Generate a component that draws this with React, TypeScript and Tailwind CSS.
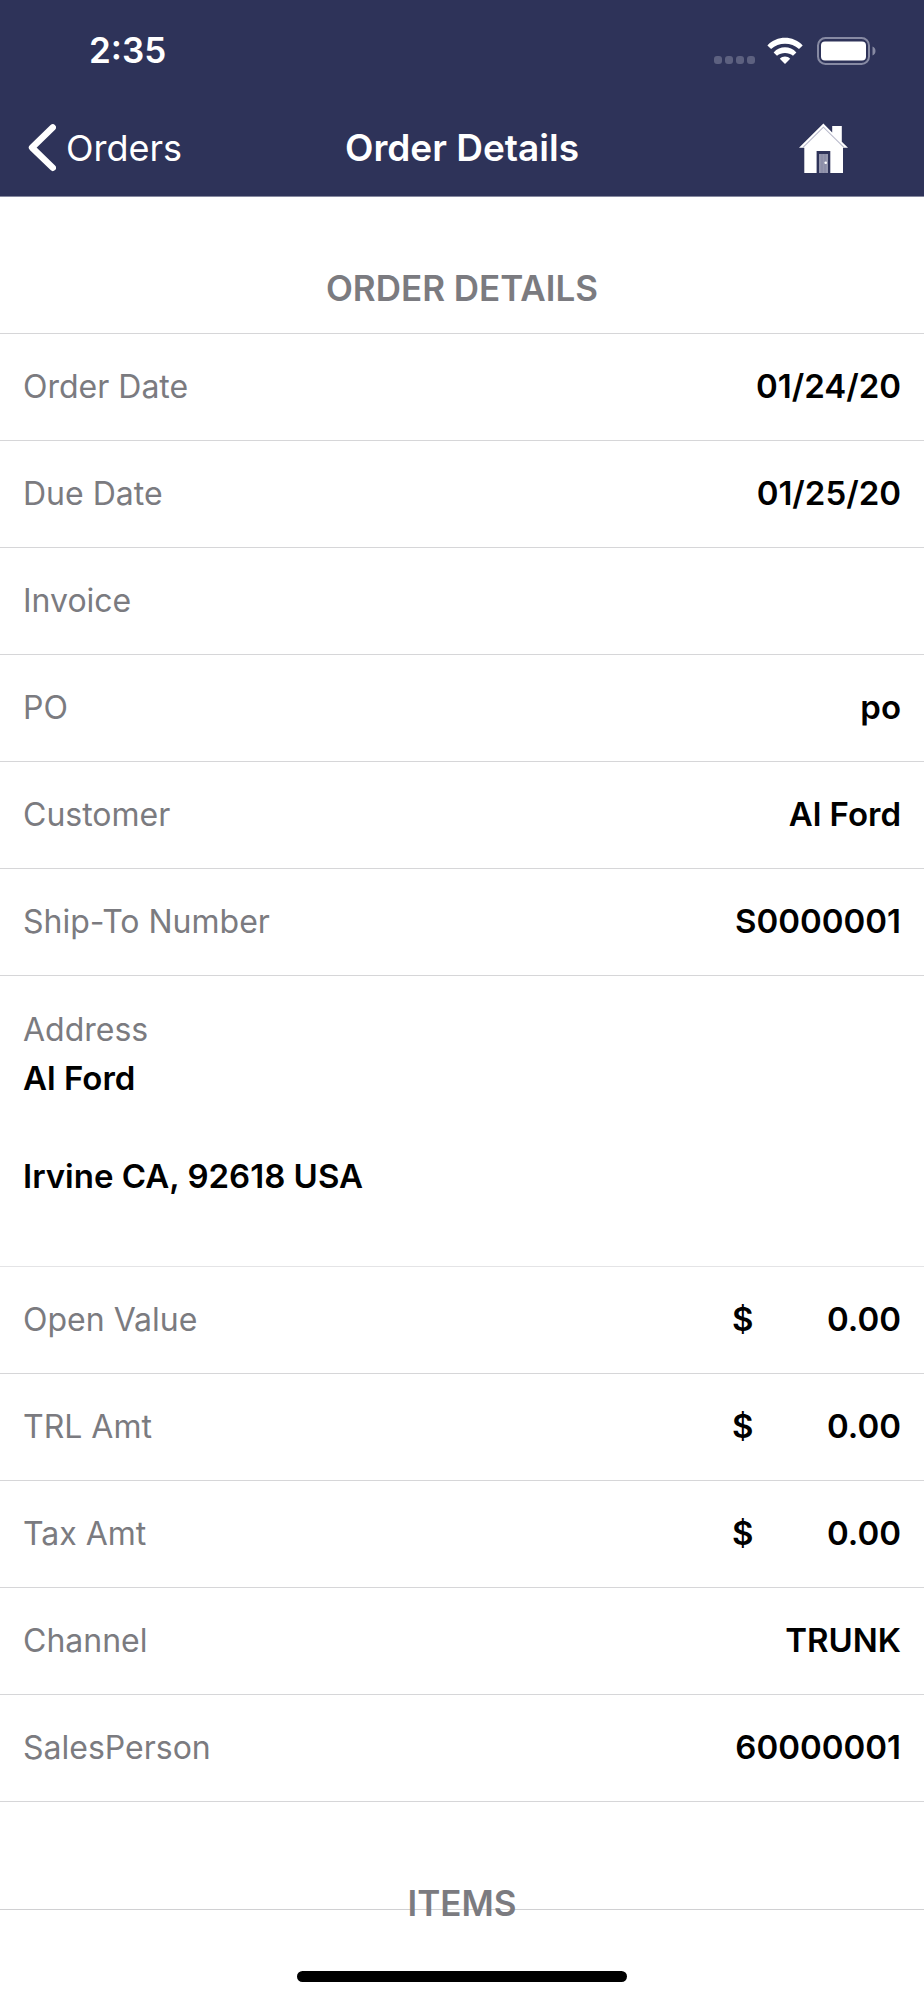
import type { ReactNode } from "react"

interface DetailRowProps {
  label: string
  children?: ReactNode
}

interface Detail {
  label: string
  value?: string
}

const orderInfo: Detail[] = [
  { label: "Order Date", value: "01/24/20" },
  { label: "Due Date", value: "01/25/20" },
  { label: "Invoice" },
  { label: "PO", value: "po" },
  { label: "Customer", value: "Al Ford" },
  { label: "Ship-To Number", value: "S0000001" },
]

const amounts: Detail[] = [
  { label: "Open Value", value: "0.00" },
  { label: "TRL Amt", value: "0.00" },
  { label: "Tax Amt", value: "0.00" },
]

const salesInfo: Detail[] = [
  { label: "Channel", value: "TRUNK" },
  { label: "SalesPerson", value: "60000001" },
]

function WifiIcon() {
  return (
    <svg width="36" height="27" viewBox="0 0 36 27" fill="white" aria-hidden="true">
      <path d="M0.4 8.4C10 -1.8 26 -1.8 35.7 8.4L32 12C24.4 4.9 11.7 4.9 4.1 12Z" />
      <path d="M6.6 15.4C13 8.6 23 8.6 29.4 15.4L26 18.7C21.6 15 14.4 15 10 18.7Z" />
      <path d="M12.8 21.8C15.6 18.8 20.4 18.8 23.2 21.8L18 27Z" />
    </svg>
  )
}

function BatteryIcon() {
  return (
    <svg width="60" height="28" viewBox="0 0 60 28" aria-hidden="true">
      <rect x="1" y="1" width="51" height="26" rx="7.5" fill="none" stroke="#878aa3" strokeWidth="2" />
      <rect x="4" y="4.5" width="45" height="19" rx="4" fill="white" />
      <path d="M55.5 9.5C59.5 11 59.5 17 55.5 18.5Z" fill="#878aa3" />
    </svg>
  )
}

function BackIcon() {
  return (
    <svg width="28" height="48" viewBox="0 0 28 48" fill="none" stroke="white" strokeWidth="6.4" strokeLinecap="round" strokeLinejoin="round" aria-hidden="true">
      <path d="M24.8 3.4L4 23.6L24.8 43.8" />
    </svg>
  )
}

function HomeIcon() {
  return (
    <svg width="50" height="50" viewBox="0 0 50 50" aria-hidden="true">
      <path d="M0 24.8L24.4 0.6L33.2 9.4V3H42.8V18.8L49 24.8H44V50H5.3V24.8Z" fill="white" />
      <path d="M3.8 24.6L24.4 4.2L45.2 24.6" fill="none" stroke="#b9bacb" strokeWidth="1.1" />
      <rect x="17.6" y="28" width="13.7" height="22" fill="#2e3359" />
      <rect x="20" y="31" width="9" height="19" fill="#9496ad" />
      <path d="M23 31V50M26 31V50" stroke="#8083a0" strokeWidth="0.7" />
      <circle cx="26.7" cy="39.7" r="1.3" fill="white" />
    </svg>
  )
}

function DetailRow({ label, children }: DetailRowProps) {
  return (
    <div className="flex h-[107px] items-center justify-between border-b border-[#d6d6d8] px-[23px]">
      <dt className="text-[32px] text-[#7b7b80]">{label}</dt>
      <dd className="font-semibold">{children}</dd>
    </div>
  )
}

export default function App() {
  return (
    <div className="min-h-screen bg-white font-['Inter',sans-serif] text-[33px] text-black">
      <header className="border-b border-[#85889f] bg-[#2e3359] text-white">
        {/* Status bar */}
        <div className="flex h-[101px] items-center justify-between pr-[47px] pl-[89px]">
          <span className="text-[35px] font-semibold">2:35</span>
          <div className="flex items-center">
            <div className="mt-[18px] mr-3 flex gap-[3px]">
              {[0, 1, 2, 3].map((dot) => (
                <span key={dot} className="size-2 rounded-[3px] bg-[#5d6180]" />
              ))}
            </div>
            <WifiIcon />
            <div className="ml-[14px]">
              <BatteryIcon />
            </div>
          </div>
        </div>

        {/* Navigation */}
        <nav className="grid h-[95px] grid-cols-[1fr_auto_1fr] items-center px-7 pb-[2px]">
          <a href="#orders" className="flex items-center gap-[10px] text-[36px]">
            <BackIcon />
            Orders
          </a>
          <h1 className="text-center text-[37px] font-semibold whitespace-nowrap">Order Details</h1>
          <button type="button" aria-label="Home" className="mr-[47px] justify-self-end">
            <HomeIcon />
          </button>
        </nav>
      </header>

      <main>
        <section>
          <h2 className="flex h-[137px] items-end justify-center border-b border-[#d6d6d8] pb-6 text-[35px] leading-[42px] font-semibold text-[#7b7b80]">
            ORDER DETAILS
          </h2>
          <dl>
            {orderInfo.map((item) => (
              <DetailRow key={item.label} label={item.label}>
                {item.value}
              </DetailRow>
            ))}

            <div className="border-b border-[#e4e4e6] px-[23px] pt-[29px] pb-[65px] leading-[49px]">
              <dt className="text-[32px] leading-[49px] text-[#7b7b80]">Address</dt>
              <dd className="font-semibold">
                Al Ford
                <br />
                <br />
                Irvine CA, 92618 USA
              </dd>
            </div>

            {amounts.map((item) => (
              <DetailRow key={item.label} label={item.label}>
                <span className="flex w-[169px] justify-between">
                  <span>$</span>
                  <span>{item.value}</span>
                </span>
              </DetailRow>
            ))}

            {salesInfo.map((item) => (
              <DetailRow key={item.label} label={item.label}>
                {item.value}
              </DetailRow>
            ))}
          </dl>
        </section>

        {/* The list separator runs behind this heading */}
        <section className="relative pt-20">
          <div className="absolute inset-x-0 top-[107px] h-px bg-[#d0d0d2]" />
          <h2 className="relative text-center text-[35px] leading-[42px] font-semibold text-[#7b7b80]">ITEMS</h2>
        </section>
      </main>

      {/* Home indicator */}
      <div className="fixed bottom-[18px] left-1/2 h-[11px] w-[330px] -translate-x-1/2 rounded-full bg-black" />
    </div>
  )
}
